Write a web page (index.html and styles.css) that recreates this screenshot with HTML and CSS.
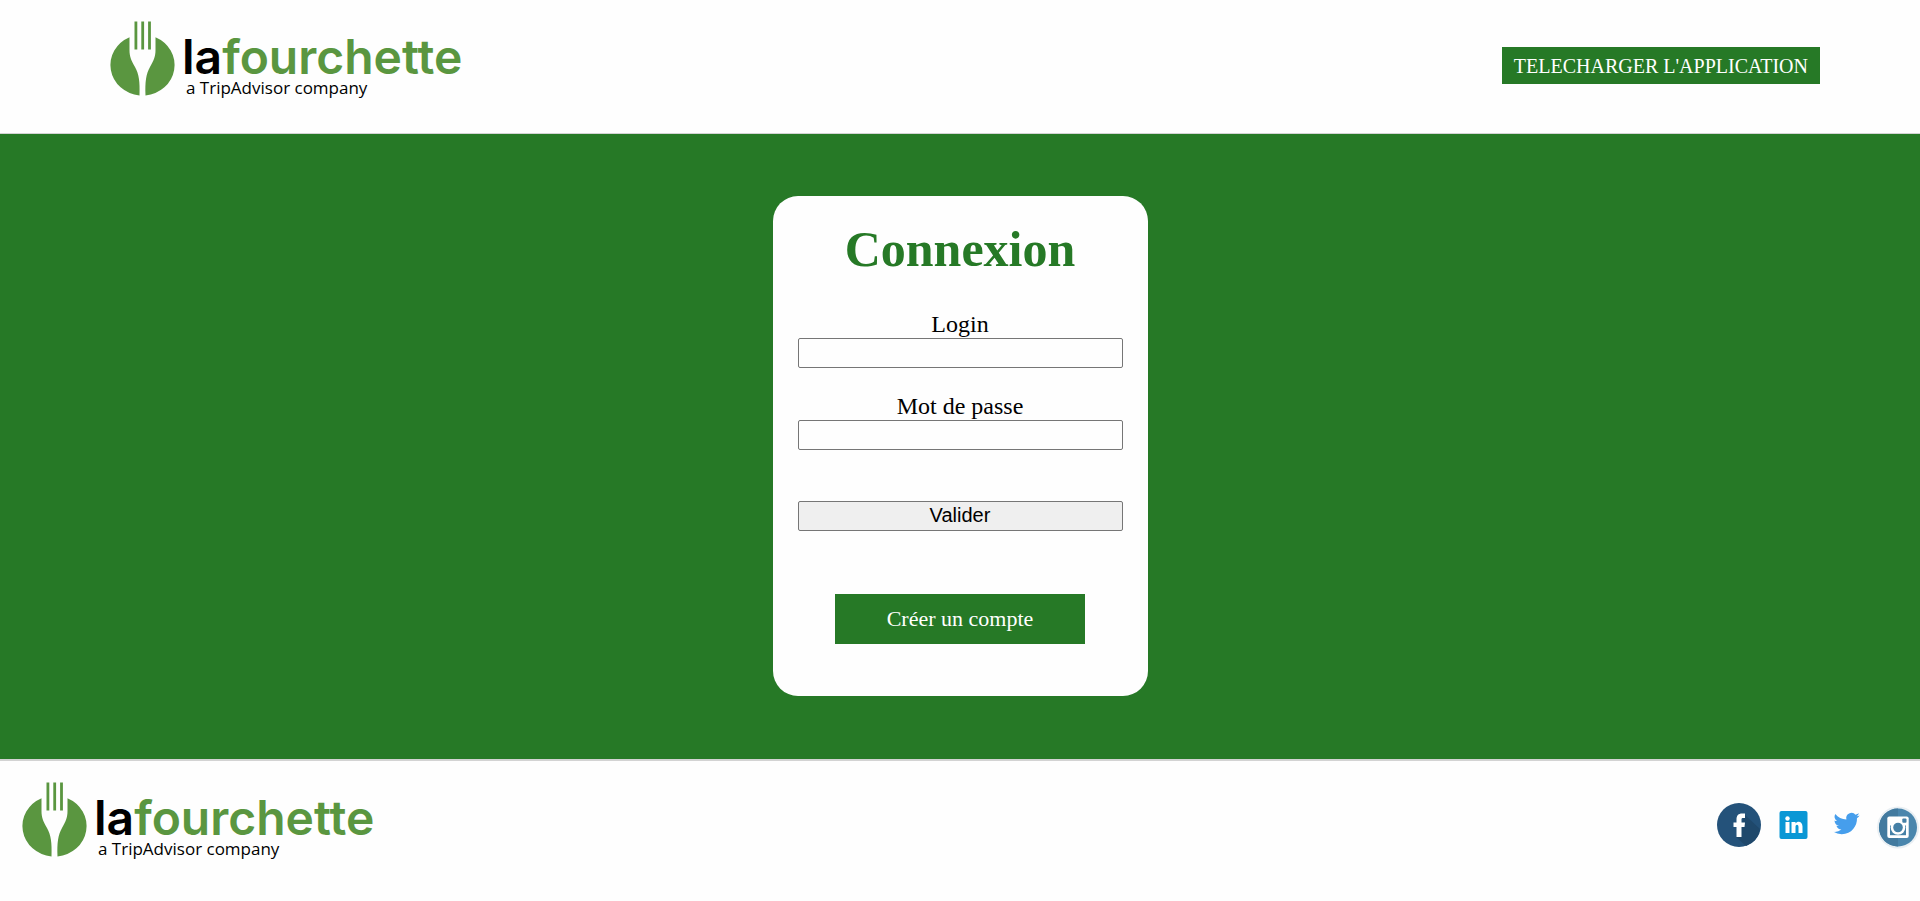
FILE: index.html
```html
<!DOCTYPE html>
<html lang="fr">
<head>
<meta charset="utf-8">
<title>Connexion - lafourchette</title>
<link rel="stylesheet" href="styles.css">
</head>
<body>
<header class="header">
  <a href="#" class="logo-link">
    <svg class="logo" viewBox="0 0 370 110" role="img" aria-label="lafourchette">
      <g class="logo-mark">
        <path d="M29.5 27.2A32.2 30.5 0 0 0 39.5 85.4C40 72 39 64 35 57C31 50 29.5 46 29.5 40Z"/>
        <path d="M55.5 27.2A32.2 30.5 0 0 1 45.5 85.4C45 72 46 64 50 57C54 50 55.5 46 55.500 40Z"/>
        <path d="M34.5 11.5h2.800v28h-2.800zM41.300 11.500h2.800v28h-2.800zM48.100 11.500h2.800v28h-2.800z"/>
      </g>
      <text class="logo-name" x="82" y="64">la<tspan class="logo-accent">fourchette</tspan></text>
      <text class="logo-tagline" x="86" y="84">a TripAdvisor company</text>
    </svg>
  </a>
  <a href="#" class="download">TELECHARGER L'APPLICATION</a>
</header>

<main class="main">
  <form class="card">
    <h1 class="title">Connexion</h1>
    <div class="field">
      <label for="login">Login</label>
      <input class="control" id="login" type="text">
    </div>
    <div class="field">
      <label for="password">Mot de passe</label>
      <input class="control" id="password" type="password">
    </div>
    <button class="control submit" type="submit">Valider</button>
    <a href="#" class="signup">Créer un compte</a>
  </form>
</main>

<footer class="footer">
  <a href="#" class="logo-link">
    <svg class="logo" viewBox="0 0 370 110" role="img" aria-label="lafourchette">
      <g class="logo-mark">
        <path d="M29.5 27.2A32.2 30.5 0 0 0 39.5 85.4C40 72 39 64 35 57C31 50 29.5 46 29.5 40Z"/>
        <path d="M55.5 27.2A32.2 30.5 0 0 1 45.5 85.4C45 72 46 64 50 57C54 50 55.5 46 55.500 40Z"/>
        <path d="M34.5 11.5h2.800v28h-2.800zM41.300 11.500h2.800v28h-2.800zM48.100 11.500h2.800v28h-2.800z"/>
      </g>
      <text class="logo-name" x="82" y="64">la<tspan class="logo-accent">fourchette</tspan></text>
      <text class="logo-tagline" x="86" y="84">a TripAdvisor company</text>
    </svg>
  </a>
  <nav class="social" aria-label="Réseaux sociaux">
    <a href="#" aria-label="Facebook">
      <svg class="social-icon" viewBox="0 0 44 46">
        <circle cx="22" cy="22" r="22" fill="#24527a"/>
        <path d="M28 12L43 26A22 22 0 0 1 29 43L19 34Z" fill="#1f486b"/>
        <path d="M19.5 34V24H16.500V19.500H19.500V16.500C19.500 12.500 21.500 10.500 25 10.500H28V15H26C24.800 15 24.500 15.500 24.500 16.500V19.500H28L27.500 24H24.500V34Z" fill="#fff"/>
      </svg>
    </a>
    <a href="#" aria-label="LinkedIn">
      <svg class="social-icon" viewBox="0 0 44 46">
        <rect x="9.500" y="8" width="28" height="28" rx="2" fill="#0a97d5"/>
        <path d="M15.500 19h4v11h-4zM21.500 19h4v1.600c2-3 7-2.400 7 3V30h-4v-6c0-3-3-3-3 0v6h-4z" fill="#fff"/>
        <circle cx="17.500" cy="15.500" r="2.200" fill="#fff"/>
      </svg>
    </a>
    <a href="#" aria-label="Twitter">
      <svg class="social-icon" viewBox="0 0 44 46">
        <path transform="translate(10.500 7.500) scale(1.090)" fill="#469eec" d="M24 4.557a9.830 9.830 0 0 1-2.828.775 4.932 4.932 0 0 0 2.165-2.724 9.864 9.864 0 0 1-3.127 1.195 4.916 4.916 0 0 0-8.384 4.482C7.691 8.094 4.066 6.130 1.640 3.161a4.822 4.822 0 0 0 1.523 6.574 4.903 4.903 0 0 1-2.229-.616c-.054 2.281 1.581 4.415 3.949 4.890a4.935 4.935 0 0 1-2.224.084 4.928 4.928 0 0 0 4.600 3.419A9.900 9.900 0 0 1 0 19.540a13.940 13.940 0 0 0 7.548 2.212c9.142 0 14.307-7.721 13.995-14.646A10.025 10.025 0 0 0 24 4.557z"/>
      </svg>
    </a>
    <a href="#" aria-label="Instagram">
      <svg class="social-icon" viewBox="0 0 44 46">
        <circle cx="22" cy="24.500" r="21" fill="#e9eff3"/>
        <circle cx="22" cy="24.500" r="19" fill="#4a86ad"/>
        <path d="M22 5.500A19 19 0 0 0 22 43.500Z" fill="#427a9f"/>
        <rect x="11.300" y="13.500" width="21.400" height="21.400" rx="2" fill="#fff"/>
        <rect x="14" y="22.500" width="16" height="9.700" fill="#4580a6"/>
        <circle cx="22" cy="24.500" r="7.300" fill="#fff"/>
        <circle cx="22" cy="24.500" r="4.800" fill="#4580a6"/>
        <rect x="26.300" y="15.500" width="4.200" height="4.200" rx="1" fill="#4580a6"/>
      </svg>
    </a>
  </nav>
</footer>
</body>
</html>
```
FILE: styles.css
```css
* {
  box-sizing: border-box;
}

body {
  margin: 0;
  background: #fefefe;
  color: #000;
  font-family: "Liberation Serif", "Times New Roman", serif;
}

a {
  color: inherit;
  text-decoration: none;
}

.header {
  display: flex;
  align-items: center;
  justify-content: space-between;
  padding: 10px 100px 13px;
  border-bottom: 1px solid #d3d3d3;
}

.logo-link,
.logo,
.social-icon {
  display: block;
}

.logo {
  width: 370px;
}

.logo-mark,
.logo-accent {
  fill: #5a9640;
}

.logo-name {
  font: 600 48px Inter, sans-serif;
}

.logo-tagline {
  font: 17px "Open Sans", sans-serif;
}

.download {
  padding: 8px 12px 6px;
  background: #267926;
  color: #fff;
  font-size: 20px;
  line-height: 23px;
}

.main {
  display: flex;
  justify-content: center;
  padding: 62px 20px 63px;
  background: #267926;
}

.card {
  display: flex;
  flex-direction: column;
  width: 375px;
  padding: 25px 25px 52px;
  border-radius: 25px;
  background: #fefefe;
  font-size: 24px;
  line-height: 27px;
  text-align: center;
}

.title {
  margin: 0 0 33px;
  color: #267926;
  font-size: 50px;
  line-height: 57px;
}

.field {
  display: flex;
  flex-direction: column;
  margin-bottom: 25px;
}

.control {
  height: 30px;
  border: 1px solid #767676;
  border-radius: 2px;
  background: #fefefe;
  font: 20px "Liberation Sans", Arial, sans-serif;
}

.submit {
  margin-top: 26px;
  padding: 0 0 2px;
  background: #efefef;
}

.signup {
  align-self: center;
  width: 250px;
  margin-top: 63px;
  background: #267926;
  color: #fff;
  font-size: 22px;
  line-height: 50px;
}

.footer {
  display: flex;
  align-items: center;
  justify-content: space-between;
  padding: 10px 0 20px 12px;
  border-top: 2px solid #d3d3d3;
}

.social {
  display: flex;
  gap: 9px;
}

.social-icon {
  width: 44px;
}
```
